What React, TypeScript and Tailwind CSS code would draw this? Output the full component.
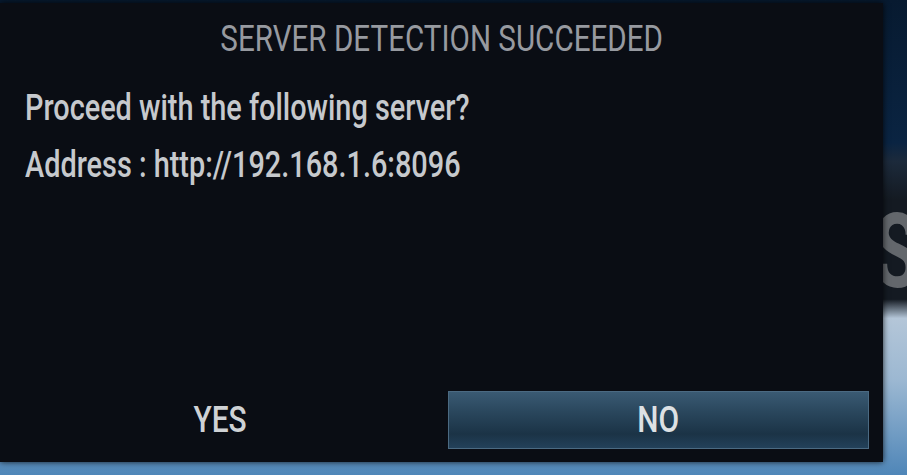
import React from "react";

const font = { fontFamily: "Roboto, 'Liberation Sans', sans-serif" };

const App: React.FC = () => {
  return (
    <div
      className="relative h-[475px] w-[907px] overflow-hidden bg-[linear-gradient(180deg,#071a30_0%,#0a2442_30%,#1c2a3b_34%,#141a22_42%,#141a22_63%,#b4c6d8_67%,#9cb8d2_80%,#4f86b8_100%)]"
      style={font}
    >
      {/* page behind the dialog */}
      <div className="absolute left-[874px] top-[200px] origin-left scale-x-[0.7] text-[104px] font-bold leading-none text-[#63676c]">
        S
      </div>

      {/* dialog */}
      <div className="absolute left-0 top-[3px] flex h-[459px] w-[883px] flex-col bg-[#0a0d14] shadow-[0_0_6px_rgba(0,0,0,0.8)]">
        <div className="flex h-[70px] items-center justify-center">
          <span className="inline-block origin-center scale-x-[0.8] text-[37px] font-normal leading-none text-[#979aa0]">
            SERVER DETECTION SUCCEEDED
          </span>
        </div>

        <div className="flex flex-col gap-[19px] pl-[25px] pt-[16px]">
          <span className="inline-block origin-left scale-x-[0.78] whitespace-nowrap text-[37px] font-medium leading-[38px] text-[#c6c9cd]">
            Proceed with the following server?
          </span>
          <span className="inline-block origin-left scale-x-[0.78] whitespace-nowrap text-[37px] font-medium leading-[38px] text-[#c6c9cd]">
            Address : http://192.168.1.6:8096
          </span>
        </div>

        <div className="mt-auto flex gap-[8px] pb-[13px] pr-[14px]">
          <button className="flex h-[58px] w-[440px] items-center justify-center">
            <span className="inline-block scale-x-[0.83] text-[36px] font-medium leading-none text-[#cfd2d5]">
              YES
            </span>
          </button>
          <button className="flex h-[58px] flex-1 items-center justify-center border border-[#4b6a82] bg-[linear-gradient(180deg,#3a5a73_0%,#2a475d_35%,#1b3346_75%,#23415a_100%)]">
            <span className="inline-block scale-x-[0.83] text-[36px] font-medium leading-none text-[#dde1e4]">
              NO
            </span>
          </button>
        </div>
      </div>
    </div>
  );
};

export default App;
